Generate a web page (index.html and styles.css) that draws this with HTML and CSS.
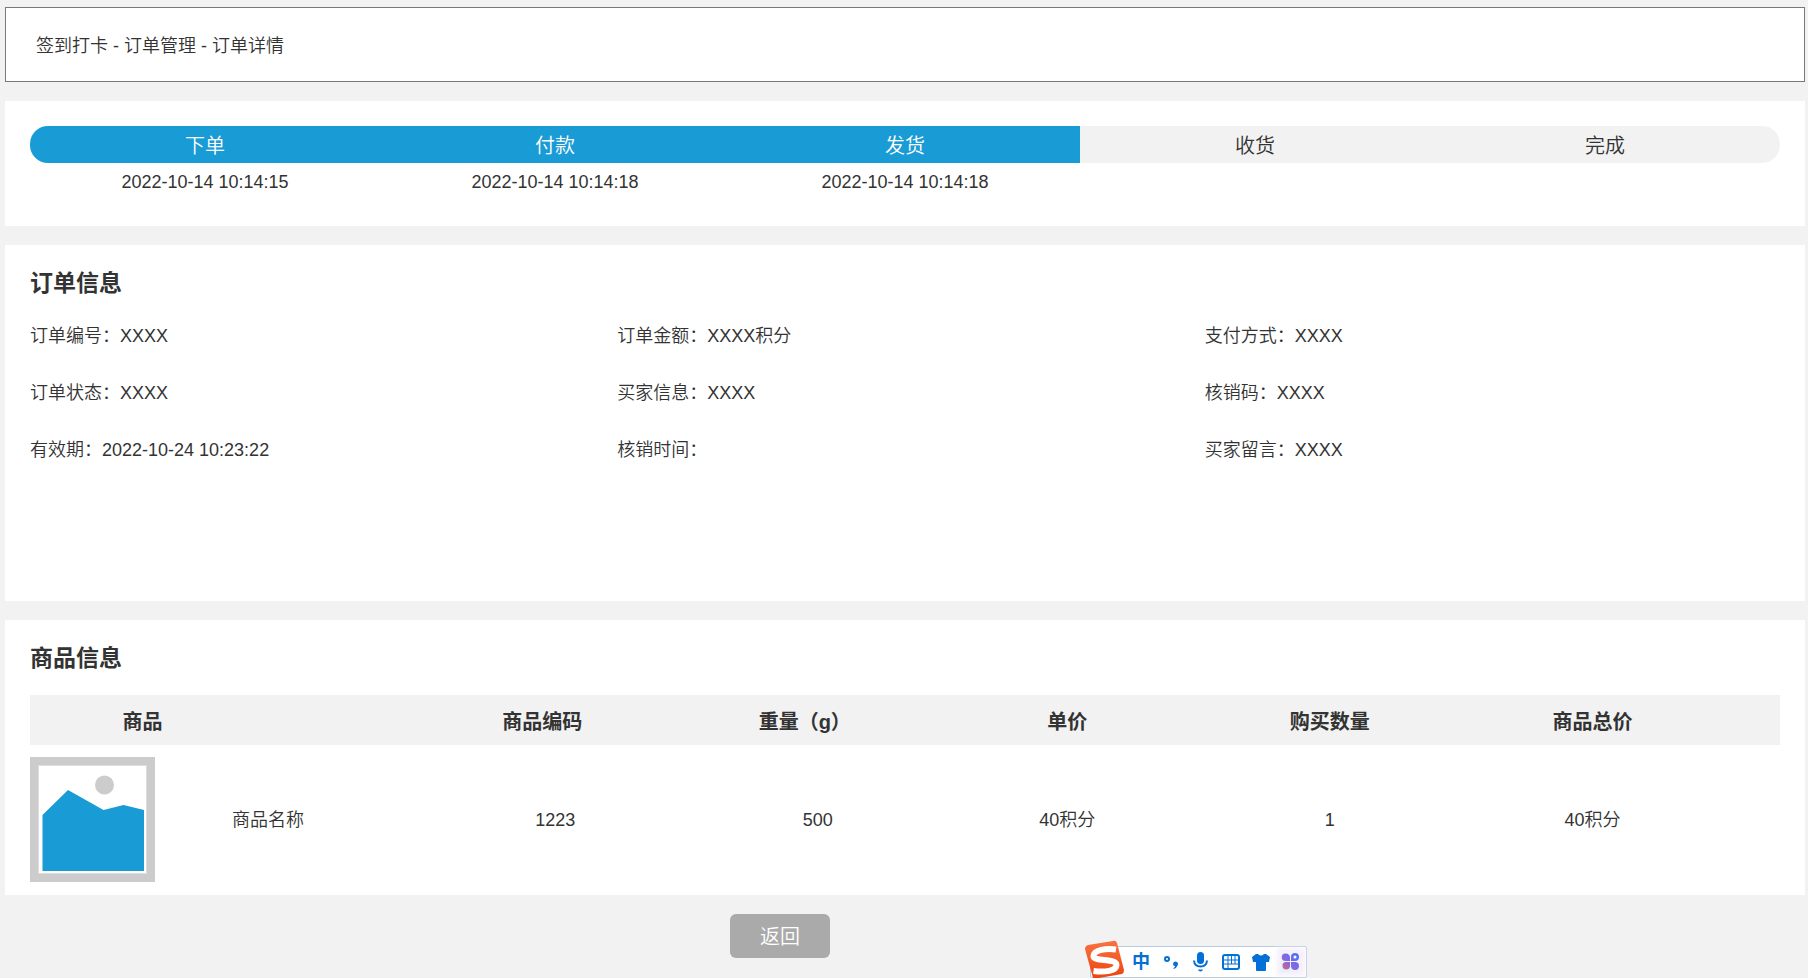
FILE: index.html
```html
<!DOCTYPE html>
<html lang="zh-CN">
<head>
<meta charset="utf-8">
<meta name="viewport" content="width=device-width, initial-scale=1">
<title>订单详情</title>
<link rel="stylesheet" href="styles.css">
</head>
<body>
<main class="page">
  <nav class="breadcrumb" aria-label="面包屑">签到打卡 - 订单管理 - 订单详情</nav>

  <section class="card steps-card">
    <ol class="steps">
      <li class="step done"><div class="step-name">下单</div><time class="step-time">2022-10-14 10:14:15</time></li>
      <li class="step done"><div class="step-name">付款</div><time class="step-time">2022-10-14 10:14:18</time></li>
      <li class="step done"><div class="step-name">发货</div><time class="step-time">2022-10-14 10:14:18</time></li>
      <li class="step"><div class="step-name">收货</div></li>
      <li class="step"><div class="step-name">完成</div></li>
    </ol>
  </section>

  <section class="card order-card">
    <h2 class="card-title">订单信息</h2>
    <div class="info-grid">
      <div>订单编号：XXXX</div>
      <div>订单金额：XXXX积分</div>
      <div>支付方式：XXXX</div>
      <div>订单状态：XXXX</div>
      <div>买家信息：XXXX</div>
      <div>核销码：XXXX</div>
      <div>有效期：2022-10-24 10:23:22</div>
      <div>核销时间：</div>
      <div>买家留言：XXXX</div>
    </div>
  </section>

  <section class="card goods-card">
    <h2 class="card-title">商品信息</h2>
    <table class="goods">
      <colgroup>
        <col class="col-image"><col class="col-name"><col class="col-data"><col class="col-data"><col class="col-data"><col class="col-data"><col>
      </colgroup>
      <thead>
        <tr>
          <th class="head-product" colspan="2">商品</th>
          <th>商品编码</th>
          <th>重量（g）</th>
          <th>单价</th>
          <th>购买数量</th>
          <th class="last">商品总价</th>
        </tr>
      </thead>
      <tbody>
        <tr>
          <td class="cell-image">
            <svg class="thumb" viewBox="0 0 125 125" role="img" aria-label="商品图片">
              <rect width="125" height="125" fill="#ccc"/>
              <rect x="8.5" y="8.5" width="108" height="108" fill="#fff" stroke="#ddd"/>
              <circle cx="74.5" cy="28" r="9.5" fill="#ccc"/>
              <path d="M12.5 58 38 33 73.500 53 93.500 48 114 53V114H12.500Z" fill="#199bd6"/>
            </svg>
          </td>
          <td class="cell-name">商品名称</td>
          <td class="shift">1223</td>
          <td class="shift">500</td>
          <td>40积分</td>
          <td>1</td>
          <td class="last">40积分</td>
        </tr>
      </tbody>
    </table>
  </section>

  <button class="back" type="button">返回</button>
</main>

<aside class="ime" aria-label="输入法">
  <svg class="ime-logo" viewBox="0 0 40 38" aria-hidden="true">
    <defs><linearGradient id="orange" x1="0" y1="0" x2="0" y2="1"><stop offset="0" stop-color="#f87340"/><stop offset="1" stop-color="#ee4410"/></linearGradient></defs>
    <path d="M3 5 28 1Q31 0 32 3L39 30Q39 33 37 34L14 38H8L0 9Q0 6 3 5Z" fill="url(#orange)"/>
    <path d="M31 9.500C21 8 9 10 8.500 16c-.5 6 23 2 23 9 0 6-12 7.500-23 6" fill="none" stroke="#fff" stroke-width="6"/>
  </svg>
  <span class="ime-lang">中</span>
  <svg class="ime-icon" viewBox="0 0 20 20"><circle cx="6" cy="7" r="2" fill="none" stroke="#0370d8" stroke-width="2"/><path d="M12 12a2.500 2.500 0 1 1 4.500 1.500q-1 3-4 3.500v-1q1.500-.5 1.500-2-2 0-2-2Z" fill="#0370d8"/></svg>
  <svg class="ime-icon" viewBox="0 0 20 20"><rect x="6" y="0" width="7" height="12" rx="3.500" fill="#0370d8"/><path d="M3 8.500Q3.500 14.500 9.500 14.500T16 8.500" fill="none" stroke="#0370d8" stroke-width="2"/><path d="M7 17.500h5q-.5 2-2.500 2t-2.500-2Z" fill="#0370d8"/></svg>
  <svg class="ime-icon" viewBox="0 0 20 20"><rect x="2" y="3" width="16" height="14" rx="2" fill="none" stroke="#0370d8" stroke-width="2"/><path d="M3 8h14M3 12h14M7 4v12M10.500 4v8M14 4v8" stroke="#0370d8"/></svg>
  <svg class="ime-icon" viewBox="0 0 20 20"><path d="M5 2h2q3 3 6 0h2l4 3-1 5h-3v8q0 1-1 1H6q-1 0-1-1v-8H2L1 5Z" fill="#0370d8"/></svg>
  <svg class="ime-icon ime-tools" viewBox="0 0 20 20">
    <defs><linearGradient id="tools" gradientUnits="userSpaceOnUse" x1="2" y1="18" x2="18" y2="2"><stop offset="0" stop-color="#e8646a"/><stop offset=".35" stop-color="#8f66dd"/><stop offset="1" stop-color="#3f74ff"/></linearGradient></defs>
    <path d="M4.500 1.500Q9 1.500 9 6V9H4.500A3.700 3.700 0 0 1 4.500 1.500ZM10 9V5A4 4 0 1 1 14 9ZM9 10V14.500A3.800 3.800 0 1 1 4.500 10ZM10 10H14.500A4 4 0 1 1 10 14.500Z" fill="url(#tools)"/>
    <circle cx="14" cy="5" r="1.500" fill="#fff"/>
  </svg>
</aside>
</body>
</html>
```
FILE: styles.css
```css
* { box-sizing: border-box; }

body {
  margin: 0;
  background: #f2f2f2;
  color: #333;
  font: 350 18px/24px "Liberation Sans", "Noto Sans CJK SC", sans-serif;
}

.page {
  display: flex;
  flex-direction: column;
  gap: 19px;
  padding: 7px 3px 21px 5px;
}

.breadcrumb {
  padding: 26px 30px 23px;
  border: 1px solid #797979;
  background: #fff;
}

.card {
  padding: 25px;
  background: #fff;
}

.steps {
  display: flex;
  margin: 0;
  padding: 0;
  list-style: none;
}
.step {
  flex: 1;
  min-height: 75px;
  text-align: center;
}
.step-name {
  margin-bottom: 7px;
  padding-top: 4px;
  background: #f2f2f2;
  font-size: 20px;
  line-height: 33px;
}
.step.done .step-name { background: #199bd6; color: #fff; }
.step:first-child .step-name { border-radius: 18px 0 0 18px; }
.step:last-child .step-name { border-radius: 0 18px 18px 0; }
.step-time { display: block; }

.card-title {
  margin: 0;
  font-size: 23px;
  font-weight: 700;
  line-height: 26px;
}

.order-card { min-height: 356px; }
.info-grid {
  display: grid;
  grid-template-columns: repeat(3, 1fr);
  gap: 33px 12px;
  padding-top: 28px;
}

.goods-card { padding-bottom: 13px; }
.goods {
  width: 100%;
  margin-top: 24px;
  border-collapse: collapse;
  table-layout: fixed;
  text-align: center;
}
.goods th,
.goods td { padding: 0; }
.goods th {
  height: 50px;
  padding-top: 3px;
  background: #f2f2f2;
  font-size: 20px;
  font-weight: 700;
}
.col-image { width: 125px; }
.col-name { width: 256px; }
.col-data { width: 15%; }
.goods .head-product { padding-right: 156px; }
.goods .cell-image { padding-top: 12px; }
.goods .cell-name { padding-right: 30px; }
.goods .shift { padding-left: 26px; }
.goods .last { padding-right: 56px; }
.goods td:not(.cell-image) { padding-top: 12px; }
.thumb { display: block; width: 125px; height: 125px; }

.back {
  width: 100px;
  height: 44px;
  margin-left: calc(50% - 175px);
  padding: 2px 0 0;
  border: 0;
  border-radius: 6px;
  background: #aaa;
  color: #fff;
  font: inherit;
  font-size: 20px;
}

.ime {
  position: fixed;
  bottom: 0;
  left: 1090px;
  display: flex;
  align-items: center;
  gap: 10px;
  height: 32px;
  padding: 0 5px 0 40px;
  border: 1px solid #b8cce4;
  border-radius: 2px;
  background: #fff;
}
.ime-logo {
  position: absolute;
  bottom: -1px;
  left: -6px;
  width: 40px;
  height: 38px;
}
.ime-lang {
  width: 20px;
  color: #0370d8;
  font-weight: 700;
  text-align: center;
}
.ime-icon { width: 20px; height: 20px; }
.ime-tools {
  box-shadow: 0 0 4px 4px #f6f0fc;
  background: linear-gradient(45deg, #d8f6fa, #f8f0fc 60%);
}
```
